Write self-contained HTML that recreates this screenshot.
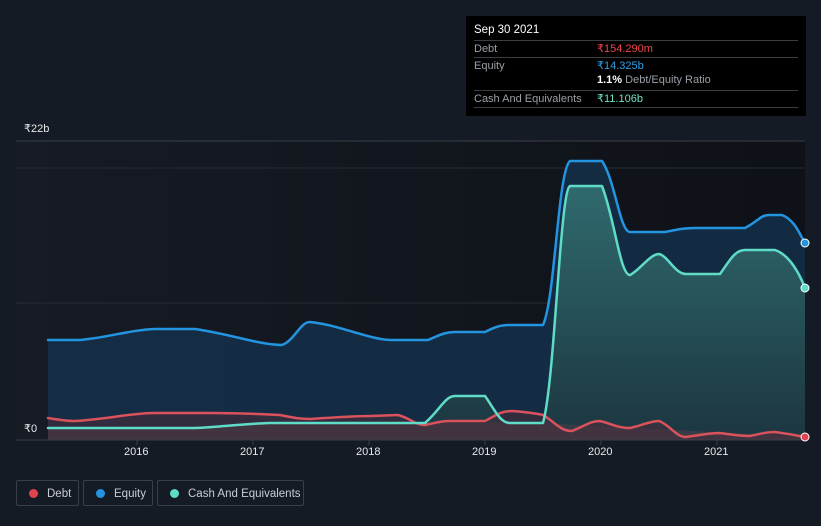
<!DOCTYPE html>
<html><head><meta charset="utf-8"><style>
body{margin:0;width:821px;height:526px;background:#151b24;font-family:"Liberation Sans",sans-serif;overflow:hidden;position:relative}
.tip{position:absolute;left:466px;top:16px;width:340px;height:100px;background:#000;color:#fff;font-size:11px}
.row{position:absolute;left:8px;width:324px;border-top:1px solid #3a3d42;height:16px;line-height:16px}
.lab{color:#9aa0a6}
.v{position:absolute;left:123px}
.leg{position:absolute;top:480px;height:26px;border:1px solid #3a4049;border-radius:2px;color:#c8ccd2;font-size:11.5px;line-height:26px;box-sizing:border-box}
.dot{display:inline-block;width:9px;height:9px;border-radius:50%;margin:0 9px 0 12px;vertical-align:-1px}
.ax{position:absolute;color:#e6e8ea;font-size:11px}
</style></head><body>
<svg width="821" height="526" style="position:absolute;left:0;top:0">
<defs>
<linearGradient id="bg" x1="0" x2="1"><stop offset="0" stop-color="#161b24"/><stop offset="1" stop-color="#0e1117"/></linearGradient>
<linearGradient id="cg" x1="0" y1="0" x2="0" y2="1"><stop offset="0" stop-color="#2f6a6e"/><stop offset="1" stop-color="#1c3640"/></linearGradient>
</defs>
<rect x="16" y="141" width="789" height="299" fill="url(#bg)"/>
<line x1="16" y1="141" x2="805" y2="141" stroke="#3b3f46" stroke-width="1"/>
<line x1="16" y1="168" x2="805" y2="168" stroke="#262b33" stroke-width="1"/>
<line x1="16" y1="303" x2="805" y2="303" stroke="#262b33" stroke-width="1"/>
<path d="M48,340 L80,340 C110,337 130,330 155,329 L195,329 C230,334 260,345 282,345 C295,340 300,322 310,322 C340,325 370,340 392,340 L428,340 C440,335 445,332 455,332 L485,332 C495,327 500,325 510,325 L543,325 C555,300 558,170 570,161 L602,161 C615,180 620,232 630,232 L665,232 C680,229 685,228 695,228 L745,228 C760,220 760,215 770,215 L782,215 C795,220 800,235 805,243 L805,440 L48,440 Z" fill="#14304a" opacity="0.85"/>
<path d="M48,428 L195,428 C220,427 240,424 270,423 L425,423 C440,410 445,396 455,396 L485,396 C495,410 500,423 510,423 L543,423 C555,380 560,190 570,186 L602,186 C615,220 620,275 630,275 C640,270 650,254 659,254 C668,256 675,274 686,274 L720,274 C730,260 735,250 745,250 L775,250 C790,255 800,275 805,288 L805,440 L48,440 Z" fill="url(#cg)"/>
<path d="M48,428 L195,428 C220,427 240,424 270,423 L425,423 L543,423 L805,437 L805,440 L48,440 Z" fill="#373d47"/>
<path d="M48,418 C60,420 68,421 75,421 C110,419 130,413 155,413 L210,413 C240,413 260,414 280,415 C295,418 300,419 310,419 C340,417 360,416 370,416 L398,415 C410,418 415,425 425,425 C435,423 440,421 450,421 L485,421 C495,416 500,411 512,411 C525,412 535,413 543,415 C555,422 560,431 572,431 C585,426 590,421 600,421 C612,424 618,428 630,428 C640,426 650,421 659,421 C670,425 676,437 686,437 C700,435 710,433 720,433 C735,435 740,436 750,436 C760,434 765,432 775,432 C790,434 800,436 805,437 L805,440 L48,440 Z" fill="#4a2e3a" opacity="0.55"/>
<g fill="none" stroke-width="2.5" stroke-linejoin="round" stroke-linecap="round">
<path d="M48,418 C60,420 68,421 75,421 C110,419 130,413 155,413 L210,413 C240,413 260,414 280,415 C295,418 300,419 310,419 C340,417 360,416 370,416 L398,415 C410,418 415,425 425,425 C435,423 440,421 450,421 L485,421 C495,416 500,411 512,411 C525,412 535,413 543,415 C555,422 560,431 572,431 C585,426 590,421 600,421 C612,424 618,428 630,428 C640,426 650,421 659,421 C670,425 676,437 686,437 C700,435 710,433 720,433 C735,435 740,436 750,436 C760,434 765,432 775,432 C790,434 800,436 805,437" stroke="#d9525c"/>
<path d="M48,428 L195,428 C220,427 240,424 270,423 L425,423 C440,410 445,396 455,396 L485,396 C495,410 500,423 510,423 L543,423 C555,380 560,190 570,186 L602,186 C615,220 620,275 630,275 C640,270 650,254 659,254 C668,256 675,274 686,274 L720,274 C730,260 735,250 745,250 L775,250 C790,255 800,275 805,288" stroke="#5fdcc8"/>
<path d="M48,340 L80,340 C110,337 130,330 155,329 L195,329 C230,334 260,345 282,345 C295,340 300,322 310,322 C340,325 370,340 392,340 L428,340 C440,335 445,332 455,332 L485,332 C495,327 500,325 510,325 L543,325 C555,300 558,170 570,161 L602,161 C615,180 620,232 630,232 L665,232 C680,229 685,228 695,228 L745,228 C760,220 760,215 770,215 L782,215 C795,220 800,235 805,243" stroke="#2394e0"/>
</g>
<line x1="16" y1="440" x2="805" y2="440" stroke="#3b3f46"/>
<g stroke="#3b3f46"><line x1="137" y1="440" x2="137" y2="445"/><line x1="253" y1="440" x2="253" y2="445"/><line x1="369" y1="440" x2="369" y2="445"/><line x1="485" y1="440" x2="485" y2="445"/><line x1="601" y1="440" x2="601" y2="445"/><line x1="717" y1="440" x2="717" y2="445"/></g>
<circle cx="805" cy="243" r="4" fill="#2394e0" stroke="#fff" stroke-width="1"/>
<circle cx="805" cy="288" r="4" fill="#5fdcc8" stroke="#fff" stroke-width="1"/>
<circle cx="805" cy="437" r="4" fill="#e0434d" stroke="#fff" stroke-width="1"/>
</svg>
<div class="ax" style="left:24px;top:122px">₹22b</div>
<div class="ax" style="left:24px;top:422px">₹0</div>
<div class="ax" style="left:124px;top:446px">2016</div>
<div class="ax" style="left:240px;top:446px">2017</div>
<div class="ax" style="left:356px;top:446px">2018</div>
<div class="ax" style="left:472px;top:446px">2019</div>
<div class="ax" style="left:588px;top:446px">2020</div>
<div class="ax" style="left:704px;top:446px">2021</div>
<div class="tip">
<div style="position:absolute;left:8px;top:8px;font-size:11.5px">Sep 30 2021</div>
<div class="row" style="top:24px"><span class="lab">Debt</span><span class="v" style="color:#f0434b">₹154.290m</span></div>
<div class="row" style="top:41px"><span class="lab">Equity</span><span class="v" style="color:#2f9ee8">₹14.325b</span></div>
<div style="position:absolute;left:131px;top:58px"><b>1.1%</b> <span class="lab">Debt/Equity Ratio</span></div>
<div class="row" style="top:74px"><span class="lab">Cash And Equivalents</span><span class="v" style="color:#6ee0cc">₹11.106b</span></div>
<div class="row" style="top:91px;height:0"></div>
</div>
<div class="leg" style="left:16px;width:63px"><span class="dot" style="background:#e0434d"></span>Debt</div>
<div class="leg" style="left:83px;width:70px"><span class="dot" style="background:#2394e0"></span>Equity</div>
<div class="leg" style="left:157px;width:147px"><span class="dot" style="background:#5fdcc8"></span>Cash And Equivalents</div>
</body></html>
